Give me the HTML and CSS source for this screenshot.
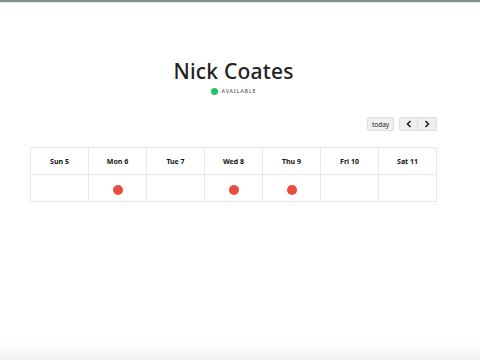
FILE: index.html
```html
<!DOCTYPE html>
<html>
<head>
<meta charset="utf-8">
<link rel="stylesheet" href="styles.css">
</head>
<body>
<div class="topbar"></div>
<div class="page">
  <h1 class="name">Nick Coates</h1>
  <div class="status"><span class="dot"></span><span class="label">AVAILABLE</span></div>
  <div class="toolbar">
    <button class="btn today">today</button>
    <div class="group">
      <button class="btn nav"><svg width="6" height="8" viewBox="0 0 6 8"><path d="M4.5 1 L1.5 4 L4.5 7" fill="none" stroke="#222" stroke-width="1.6"/></svg></button>
      <button class="btn nav"><svg width="6" height="8" viewBox="0 0 6 8"><path d="M1.5 1 L4.5 4 L1.5 7" fill="none" stroke="#222" stroke-width="1.6"/></svg></button>
    </div>
  </div>
  <div class="cal">
    <div class="hd">Sun 5</div>
    <div class="hd">Mon 6</div>
    <div class="hd">Tue 7</div>
    <div class="hd">Wed 8</div>
    <div class="hd">Thu 9</div>
    <div class="hd">Fri 10</div>
    <div class="hd">Sat 11</div>
    <div class="cell"></div>
    <div class="cell"><span class="ev"></span></div>
    <div class="cell"></div>
    <div class="cell"><span class="ev"></span></div>
    <div class="cell"><span class="ev"></span></div>
    <div class="cell"></div>
    <div class="cell"></div>
  </div>
</div>
<div class="bottom"></div>
</body>
</html>
```
FILE: styles.css
```css
html, body { margin: 0; padding: 0; background: #fff; height: 100%; overflow: hidden; }
body { font-family: "Noto Sans", "Open Sans", sans-serif; color: #222; position: relative; }
.topbar { height: 2px; background: #8a8f8d; border-bottom: 1px solid #d9f2e4; }
.page { width: 407px; margin-left: 30px; display: flex; flex-direction: column; align-items: center; }
.name { margin: 53px 0 0; font-size: 21px; font-weight: 500; line-height: 30px; letter-spacing: 0.2px; color: #222; }
.status { display: flex; align-items: center; gap: 4px; margin-top: -1px; height: 12px; }
.dot { width: 7px; height: 7px; border-radius: 50%; background: #22c55e; }
.label { font-size: 5.5px; letter-spacing: 0.8px; color: #444; }
.toolbar { align-self: stretch; display: flex; justify-content: flex-end; align-items: center; gap: 5px; margin-top: 20px; height: 14px; }
.btn { font-family: inherit; background: #efefef; border: 1px solid #ddd; border-radius: 2px; height: 14px; padding: 0; margin: 0; display: flex; align-items: center; justify-content: center; color: #222; }
.today { width: 27px; font-size: 6.5px; }
.group { display: flex; }
.nav { width: 19px; }
.nav:first-child { border-radius: 2px 0 0 2px; }
.nav:last-child { border-radius: 0 2px 2px 0; border-left: none; }
.cal { align-self: stretch; margin-top: 16px; display: grid; grid-template-columns: repeat(7, 1fr); border-top: 1px solid #e8e8e8; border-left: 1px solid #e8e8e8; }
.hd, .cell { border-right: 1px solid #e8e8e8; border-bottom: 1px solid #e8e8e8; display: flex; align-items: center; justify-content: center; }
.hd { height: 26px; font-size: 7px; font-weight: 700; color: #111; }
.cell { height: 26px; }
.ev { width: 10px; height: 10px; border-radius: 50%; background: #e74c3c; margin-top: 3px; }
.bottom { position: absolute; left: 0; right: 0; bottom: 0; height: 16px; background: linear-gradient(#fff, #f2f2f2); border-top: 1px solid #fafafa; }
```
